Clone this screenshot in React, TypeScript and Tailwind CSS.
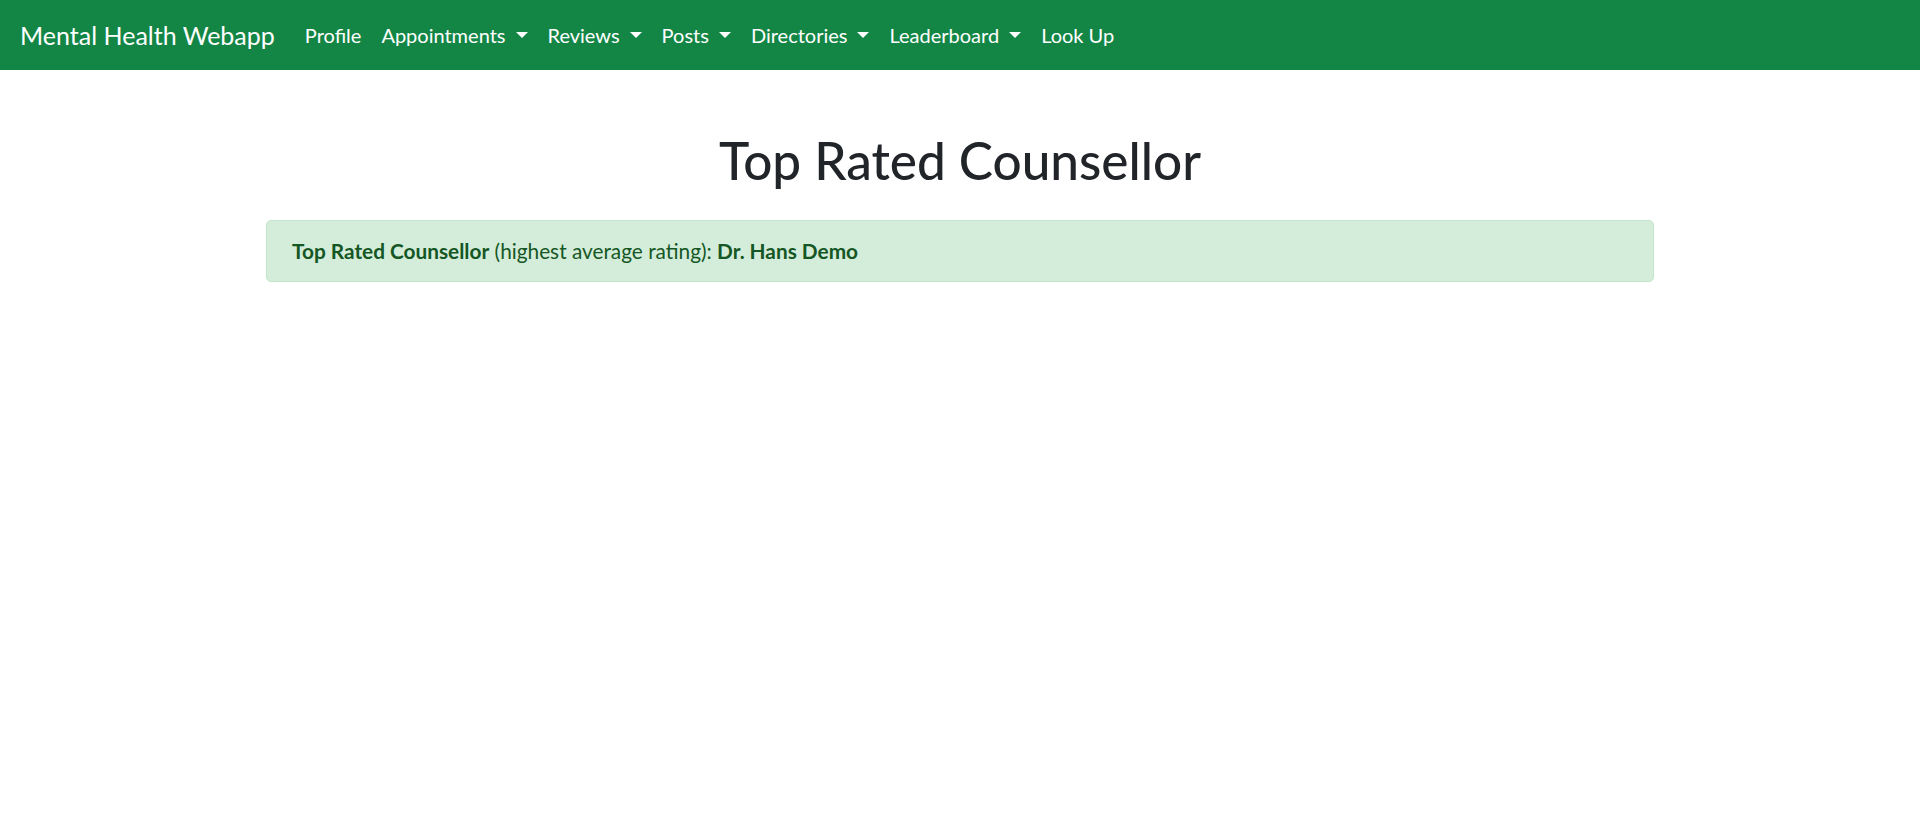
const navItems = [
  { label: "Profile", dropdown: false },
  { label: "Appointments", dropdown: true },
  { label: "Reviews", dropdown: true },
  { label: "Posts", dropdown: true },
  { label: "Directories", dropdown: true },
  { label: "Leaderboard", dropdown: true },
  { label: "Look Up", dropdown: false },
];

function Caret() {
  return (
    <span className="ml-[10px] inline-block h-0 w-0 border-x-[6px] border-t-[6px] border-x-transparent border-t-white align-middle" />
  );
}

export default function App() {
  return (
    <div className="min-h-screen bg-white font-['Lato',sans-serif] text-[#212529]">
      <nav className="flex h-[70px] items-center bg-[#138646] px-[20px]">
        <a className="mr-[20px] text-[25px] leading-[37px] text-white">Mental Health Webapp</a>
        <ul className="flex items-center">
          {navItems.map((item) => (
            <li key={item.label}>
              <a className="flex items-center px-[10px] text-[20px] leading-[30px] text-white">
                {item.label}
                {item.dropdown ? <Caret /> : null}
              </a>
            </li>
          ))}
        </ul>
      </nav>

      <main className="mx-auto w-[1388px]">
        <h1 className="mt-[60px] mb-[30px] text-center text-[51.3px] leading-[60px] font-medium">
          Top Rated Counsellor
        </h1>
        <div className="rounded-[5px] border border-[#c3e6cb] bg-[#d4edda] px-[25px] py-[15px] text-[20.8px] leading-[30px] text-[#155724]">
          <strong className="font-bold">Top Rated Counsellor</strong> (highest average rating):{" "}
          <strong className="font-bold">Dr. Hans Demo</strong>
        </div>
      </main>
    </div>
  );
}
